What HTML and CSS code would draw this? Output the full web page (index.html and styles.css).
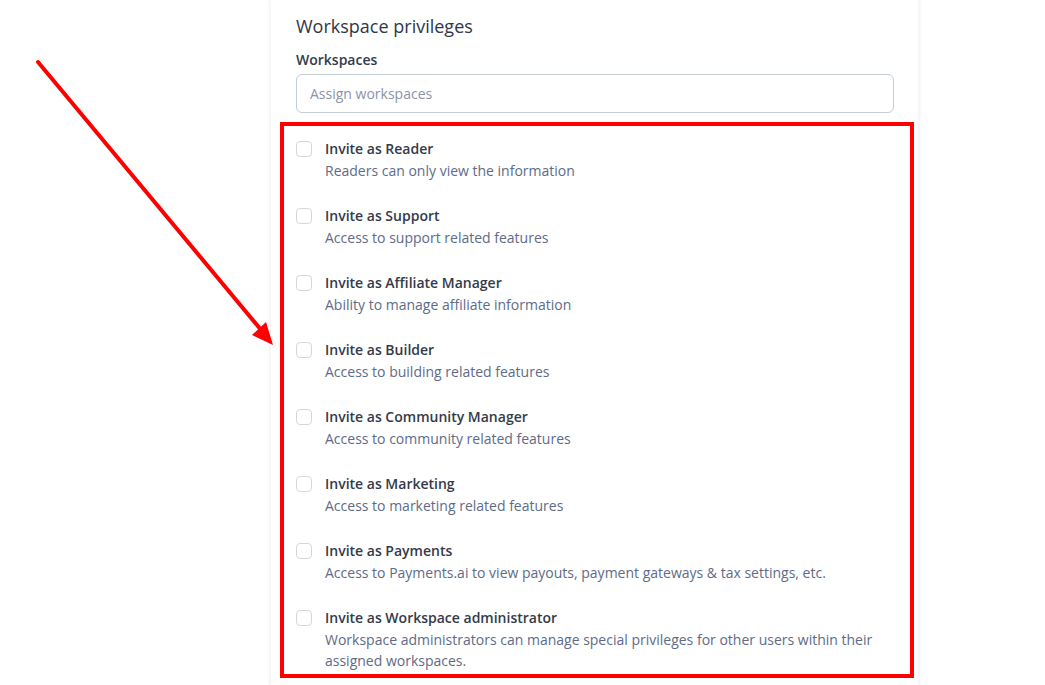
FILE: index.html
```html
<!DOCTYPE html>
<html lang="en">
<head>
    <meta charset="UTF-8">
    <meta name="viewport" content="width=device-width, initial-scale=1.0">
    <title>Workspace privileges</title>
    <link rel="stylesheet" href="styles.css">
</head>
<body>
    <svg class="arrow" width="290" height="360" viewBox="0 0 290 360">
        <line x1="38" y1="62" x2="262" y2="331" stroke="#ff0000" stroke-width="4" stroke-linecap="round"/>
        <polygon points="273,345 252,335 266,322" fill="#ff0000"/>
    </svg>

    <div class="card">
        <h2 class="title">Workspace privileges</h2>
        <label class="field-label" for="workspaces">Workspaces</label>
        <input type="text" id="workspaces" class="field-input" placeholder="Assign workspaces">

        <div class="roles">
            <div class="role">
                <span class="check"></span>
                <div class="role-text">
                    <div class="role-name">Invite as Reader</div>
                    <div class="role-desc">Readers can only view the information</div>
                </div>
            </div>
            <div class="role">
                <span class="check"></span>
                <div class="role-text">
                    <div class="role-name">Invite as Support</div>
                    <div class="role-desc">Access to support related features</div>
                </div>
            </div>
            <div class="role">
                <span class="check"></span>
                <div class="role-text">
                    <div class="role-name">Invite as Affiliate Manager</div>
                    <div class="role-desc">Ability to manage affiliate information</div>
                </div>
            </div>
            <div class="role">
                <span class="check"></span>
                <div class="role-text">
                    <div class="role-name">Invite as Builder</div>
                    <div class="role-desc">Access to building related features</div>
                </div>
            </div>
            <div class="role">
                <span class="check"></span>
                <div class="role-text">
                    <div class="role-name">Invite as Community Manager</div>
                    <div class="role-desc">Access to community related features</div>
                </div>
            </div>
            <div class="role">
                <span class="check"></span>
                <div class="role-text">
                    <div class="role-name">Invite as Marketing</div>
                    <div class="role-desc">Access to marketing related features</div>
                </div>
            </div>
            <div class="role">
                <span class="check"></span>
                <div class="role-text">
                    <div class="role-name">Invite as Payments</div>
                    <div class="role-desc">Access to Payments.ai to view payouts, payment gateways &amp; tax settings, etc.</div>
                </div>
            </div>
            <div class="role">
                <span class="check"></span>
                <div class="role-text">
                    <div class="role-name">Invite as Workspace administrator</div>
                    <div class="role-desc">Workspace administrators can manage special privileges for other users within their<br>assigned workspaces.</div>
                </div>
            </div>
        </div>
    </div>
</body>
</html>
```

FILE: styles.css
```css
body {
    margin: 0;
    background-color: #fff;
    font-family: "Open Sans", "Liberation Sans", sans-serif;
    color: #333a4a;
    height: 685px;
    overflow: hidden;
}
.arrow {
    position: absolute;
    left: 0;
    top: 0;
}
.card {
    width: 598px;
    margin-left: 271px;
    padding: 0 24px 0 25px;
    height: 685px;
    background-color: #fff;
    box-shadow: -2px 0 3px rgba(0,0,0,0.05), 2px 0 3px rgba(0,0,0,0.05);
}
.title {
    margin: 0;
    padding-top: 14px;
    font-size: 18px;
    font-weight: 500;
    line-height: 24px;
    color: #2f3647;
}
.field-label {
    display: block;
    margin-top: 13px;
    font-size: 14px;
    font-weight: 600;
    line-height: 18px;
    color: #333a4a;
}
.field-input {
    display: block;
    width: 100%;
    height: 39px;
    margin-top: 5px;
    padding: 0 13px;
    border: 1px solid #c4ccd8;
    border-radius: 6px;
    box-sizing: border-box;
    font-family: inherit;
    font-size: 14px;
    color: #333a4a;
    outline: none;
}
.field-input::placeholder {
    color: #8b93a5;
}
.roles {
    margin: 9px -20px 0 -16px;
    padding: 14px 0 0 12px;
    border: 4px solid #ff0000;
    height: 556px;
    box-sizing: border-box;
}
.role {
    display: flex;
    gap: 13px;
    margin-bottom: 26px;
}
.check {
    flex: none;
    width: 14px;
    height: 14px;
    border: 1px solid #d3d7e0;
    border-radius: 4px;
    margin-top: 1px;
}
.role-name {
    font-size: 14px;
    font-weight: 600;
    line-height: 18px;
    color: #333a4a;
}
.role-desc {
    margin-top: 2px;
    font-size: 14px;
    line-height: 21px;
    color: #5d6b88;
}
```
